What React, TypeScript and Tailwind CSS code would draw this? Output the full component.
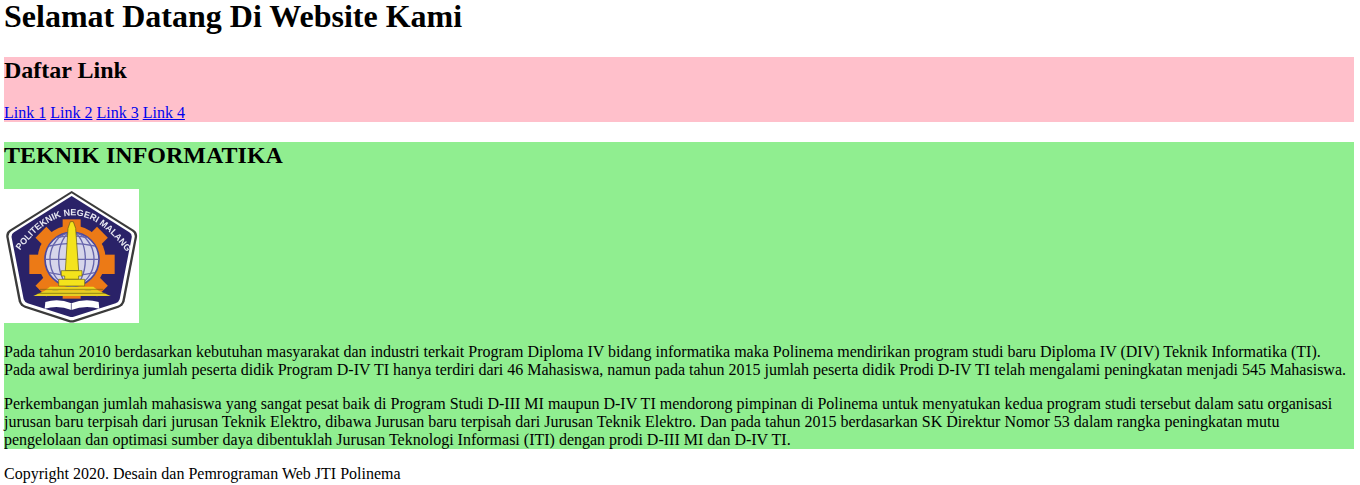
import React from 'react';

const Logo = () => (
  <svg viewBox="12 27 405 402" className="block w-[135px] h-[134px] bg-white" role="img" aria-label="Logo Politeknik Negeri Malang">
    <defs>
      <filter id="soft" x="-5%" y="-5%" width="110%" height="110%">
        <feGaussianBlur stdDeviation="1.8" />
      </filter>
      <path id="arc" d="M60 212 Q215 2 374 208" fill="none" />
    </defs>
    <g filter="url(#soft)">
      {/* shield */}
      <path d="M215 33 L402 150 Q413 158 411 172 L374 364 Q370 378 356 383 L225 426 Q215 429 205 426 L74 383 Q60 378 56 364 L19 172 Q17 158 28 150 Z" fill="#3a3a3a" />
      <path d="M215 40 L396 154 Q406 160 404 172 L367 362 Q364 373 353 377 L223 419 Q215 422 207 419 L77 377 Q66 373 63 362 L26 172 Q24 160 34 154 Z" fill="#ffffff" />
      <path d="M215 48 L388 157 Q397 163 395 173 L359 358 Q356 367 347 370 L221 410 Q215 412 209 410 L83 370 Q74 367 71 358 L35 173 Q33 163 42 157 Z" fill="#2a2468" />

      {/* gear */}
      <g fill="#ec7a16">
        <circle cx="215" cy="238" r="102" />
        <rect x="188" y="118" width="54" height="40" />
        <rect x="306" y="224" width="38" height="58" />
        <rect x="88" y="224" width="38" height="58" />
        <rect x="188" y="322" width="54" height="34" />
        <rect x="116" y="150" width="46" height="46" transform="rotate(45 139 173)" />
        <rect x="268" y="150" width="46" height="46" transform="rotate(45 291 173)" />
        <rect x="116" y="294" width="46" height="46" transform="rotate(45 139 317)" />
        <rect x="268" y="294" width="46" height="46" transform="rotate(45 291 317)" />
      </g>

      {/* globe */}
      <circle cx="216" cy="238" r="81" fill="#d6d5ea" stroke="#4b4aa0" strokeWidth="5" />
      <g fill="none" stroke="#6766ad" strokeWidth="4">
        <ellipse cx="216" cy="238" rx="40" ry="80" />
        <ellipse cx="216" cy="238" rx="66" ry="80" />
        <path d="M137 238 H295" />
        <path d="M147 198 Q216 182 285 198" />
        <path d="M147 278 Q216 294 285 278" />
        <path d="M169 173 Q216 162 263 173" />
      </g>

      {/* monument */}
      <path d="M211 125 L220 125 L227 145 L236 272 L196 272 L204 145 Z" fill="#f4e31d" stroke="#5c5410" strokeWidth="2" />
      <path d="M184 272 H246 V288 H236 V298 H194 V288 H184 Z" fill="#f4e31d" stroke="#6a6012" strokeWidth="2" />
      <path d="M176 298 H254 V318 H176 Z" fill="#f4e31d" stroke="#6a6012" strokeWidth="2" />
      <path d="M150 320 H280 L296 332 H134 Z" fill="#f0d81c" />
      <path d="M134 332 H296 L332 348 H100 Z" fill="#e6cf22" />
      <path d="M120 328 H310 M112 340 H318" stroke="#6a6012" strokeWidth="2" />

      {/* book */}
      <path d="M136 366 Q176 354 214 370 Q254 354 296 366 L298 386 Q254 374 214 390 Q176 374 134 386 Z" fill="#ffffff" />
      <path d="M214 370 V390" stroke="#2a2468" strokeWidth="2" />

      <text fontFamily="'Liberation Sans', sans-serif" fontWeight="700" fontSize="27" fill="#e8e8f2">
        <textPath href="#arc" startOffset="0" textLength="400" lengthAdjust="spacingAndGlyphs">POLITEKNIK NEGERI MALANG</textPath>
      </text>
    </g>
  </svg>
);

export default function App() {
  return (
    <div className="bg-white text-black font-['Liberation_Serif',serif] text-base leading-[18px] w-[1360px] h-[485px] overflow-hidden">
      <div className="w-[1350px] ml-1">
        <h1 className="text-[32px] leading-[32px] font-bold mb-[25px]">Selamat Datang Di Website Kami</h1>

        <div className="bg-[#ffc0cb]">
          <h2 className="text-2xl leading-[27px] font-bold mb-5">Daftar Link</h2>
          <nav className="flex gap-1">
            <a href="#" className="text-[#0000ee] underline">Link 1</a>
            <a href="#" className="text-[#0000ee] underline">Link 2</a>
            <a href="#" className="text-[#0000ee] underline">Link 3</a>
            <a href="#" className="text-[#0000ee] underline">Link 4</a>
          </nav>
        </div>

        <div className="bg-[#90ee90] mt-5">
          <h2 className="text-2xl leading-[27px] font-bold mb-5">TEKNIK INFORMATIKA</h2>
          <div className="mb-5">
            <Logo />
          </div>
          <p className="mb-4">
            Pada tahun 2010 berdasarkan kebutuhan masyarakat dan industri terkait Program Diploma IV bidang informatika maka Polinema mendirikan program studi baru Diploma IV (DIV) Teknik Informatika (TI). Pada awal berdirinya jumlah peserta didik Program D-IV TI hanya terdiri dari 46 Mahasiswa, namun pada tahun 2015 jumlah peserta didik Prodi D-IV TI telah mengalami peningkatan menjadi 545 Mahasiswa.
          </p>
          <p>
            Perkembangan jumlah mahasiswa yang sangat pesat baik di Program Studi D-III MI maupun D-IV TI mendorong pimpinan di Polinema untuk menyatukan kedua program studi tersebut dalam satu organisasi jurusan baru terpisah dari jurusan Teknik Elektro, dibawa Jurusan baru terpisah dari Jurusan Teknik Elektro. Dan pada tahun 2015 berdasarkan SK Direktur Nomor 53 dalam rangka peningkatan mutu pengelolaan dan optimasi sumber daya dibentuklah Jurusan Teknologi Informasi (ITI) dengan prodi D-III MI dan D-IV TI.
          </p>
        </div>

        <p className="mt-4">Copyright 2020. Desain dan Pemrograman Web JTI Polinema</p>
      </div>
    </div>
  );
}
